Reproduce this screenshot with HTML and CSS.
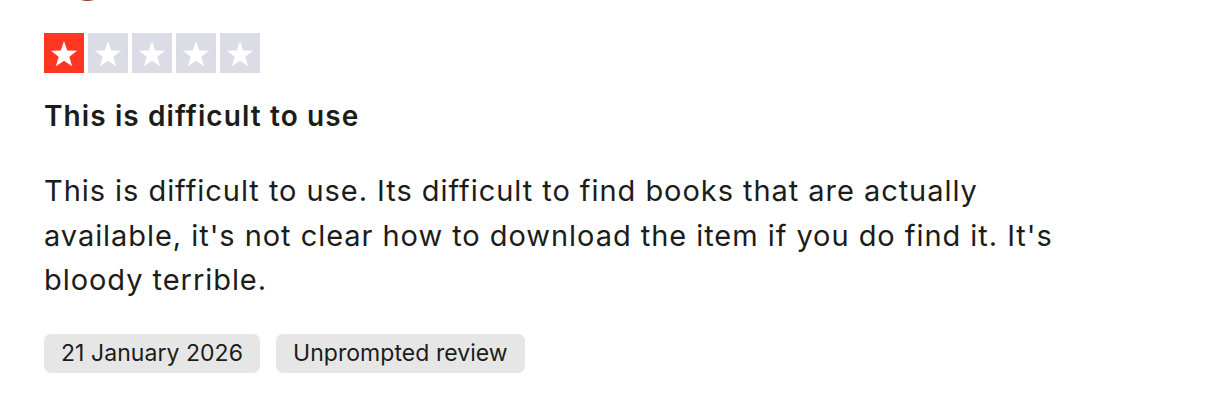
FILE: index.html
```html
<!DOCTYPE html>
<html lang="en">
<head>
<meta charset="utf-8">
<link rel="stylesheet" href="styles.css">
</head>
<body>
<article class="review">
  <div class="avatar"></div>
  <div class="stars" aria-label="Rated 1 out of 5 stars">
    <span class="star star-on"><svg viewBox="0 0 24 24"><path d="M12 3.2l2.47 6.95 7.37.2-5.85 4.49 2.1 7.07L12 17.74l-6.09 4.17 2.1-7.07-5.85-4.49 7.37-.2z"/></svg></span>
    <span class="star"><svg viewBox="0 0 24 24"><path d="M12 3.2l2.47 6.95 7.37.2-5.85 4.49 2.1 7.07L12 17.74l-6.09 4.17 2.1-7.07-5.85-4.49 7.37-.2z"/></svg></span>
    <span class="star"><svg viewBox="0 0 24 24"><path d="M12 3.2l2.47 6.95 7.37.2-5.85 4.49 2.1 7.07L12 17.74l-6.09 4.17 2.1-7.07-5.85-4.49 7.37-.2z"/></svg></span>
    <span class="star"><svg viewBox="0 0 24 24"><path d="M12 3.2l2.47 6.95 7.37.2-5.85 4.49 2.1 7.07L12 17.74l-6.09 4.17 2.1-7.07-5.85-4.49 7.37-.2z"/></svg></span>
    <span class="star"><svg viewBox="0 0 24 24"><path d="M12 3.2l2.47 6.95 7.37.2-5.85 4.49 2.1 7.07L12 17.74l-6.09 4.17 2.1-7.07-5.85-4.49 7.37-.2z"/></svg></span>
  </div>
  <h2 class="title">This is difficult to use</h2>
  <p class="text">This is difficult to use. Its difficult to find books that are actually available, it's not clear how to download the item if you do find it. It's bloody terrible.</p>
  <div class="tags">
    <span class="tag">21 January 2026</span>
    <span class="tag">Unprompted review</span>
  </div>
</article>
</body>
</html>
```
FILE: styles.css
```css
* { box-sizing: border-box; }
html, body { margin: 0; padding: 0; background: #fff; }
body {
  font-family: Inter, "Noto Sans", sans-serif;
  color: #1c1c1a;
  overflow: hidden;
}
.review {
  padding: 0 44px;
  width: 1160px;
}
.avatar {
  width: 47px;
  height: 47px;
  margin-left: 20px;
  margin-top: -46px;
  border-radius: 50%;
  background: linear-gradient(90deg, #9a9a9a 0%, #8c3a2f 35%, #a1402f 65%, #c9c9c9 100%);
}
.stars {
  display: flex;
  gap: 4px;
  margin-top: 32px;
}
.star {
  width: 40px;
  height: 40px;
  background: #dcdce6;
  display: flex;
  align-items: center;
  justify-content: center;
}
.star svg { width: 32px; height: 32px; fill: #fff; }
.star-on { background: #ff3722; }
.title {
  margin: 27px 0 0;
  font-size: 28px;
  line-height: 32px;
  font-weight: 600;
  letter-spacing: 1.1px;
}
.text {
  margin: 37px 0 0;
  font-size: 29px;
  line-height: 44.5px;
  font-weight: 400;
  letter-spacing: 0.95px;
  max-width: 1040px;
}
.tags {
  display: flex;
  gap: 16px;
  margin-top: 31px;
}
.tag {
  background: #e6e6e6;
  border-radius: 7px;
  height: 39px;
  padding: 0 17px;
  display: flex;
  align-items: center;
  font-size: 23px;
  letter-spacing: 0.05px;
}
```
